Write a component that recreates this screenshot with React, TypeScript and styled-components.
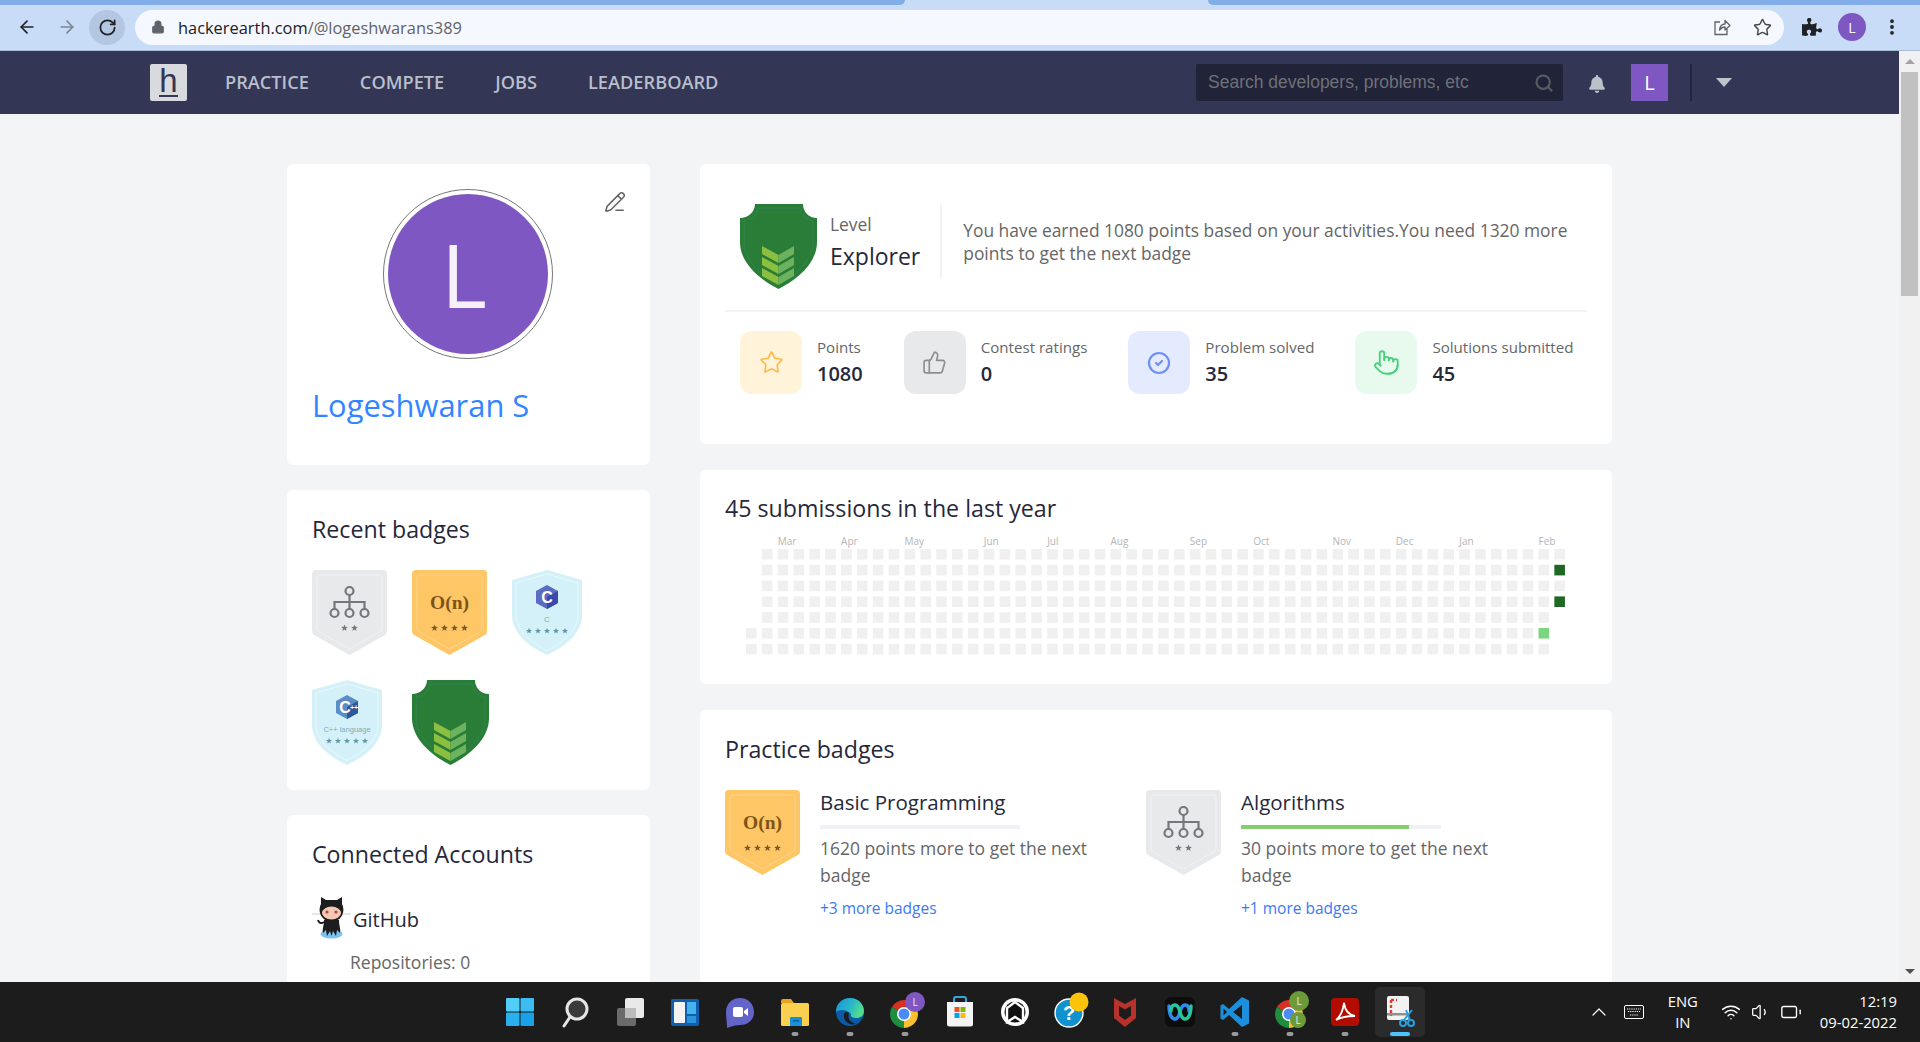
// import libraries
import React from 'react'
import styled, { createGlobalStyle } from 'styled-components'
import {
  ArrowLeft, ArrowRight, RotateCw, Lock, Star, MoreVertical, Search,
  PencilLine, ThumbsUp, Pointer, CircleCheck, ChevronUp, Wifi, Volume1, Battery
} from 'lucide-react'
import { FaBell, FaPuzzlePiece } from 'react-icons/fa'

const GlobalStyle = createGlobalStyle`
  html, body {
    margin: 0;
    height: 100%;
    overflow: hidden;
    background: #f3f4f6;
    font-family: "Open Sans", "Liberation Sans", sans-serif;
    color: #26283a;
  }
  * { box-sizing: border-box; }
`

const Shell = styled.div`
  display: flex;
  flex-direction: column;
  height: 100vh;
`

/* browser chrome */
const TabStrip = styled.div`
  display: flex;
  justify-content: space-between;
  height: 5px;
  background: #c8dcf8;
`
const TabEdge = styled.div<{ $side: 'left' | 'right' }>`
  height: 5px;
  width: ${(p) => (p.$side === 'left' ? '905px' : '712px')};
  background: #83ade9;
  border-radius: ${(p) => (p.$side === 'left' ? '0 0 6px 0' : '0 0 0 6px')};
`
const Toolbar = styled.div`
  display: flex;
  align-items: center;
  height: 46px;
  padding: 0 8px 1px 7px;
  background: #c8dcf8;
  border-bottom: 1px solid #a9bcd6;
`
const ToolSlot = styled.div<{ $muted?: boolean }>`
  display: flex;
  align-items: center;
  justify-content: center;
  width: 40px;
  height: 35px;
  color: ${(p) => (p.$muted ? '#7d8694' : '#202124')};
`
const ReloadCircle = styled.div`
  display: flex;
  align-items: center;
  justify-content: center;
  width: 36px;
  height: 35px;
  border-radius: 50%;
  background: #b4c7e2;
`
const Omnibox = styled.div`
  display: flex;
  flex: 1;
  align-items: center;
  height: 35px;
  margin: 0 8px;
  padding: 0 2px 0 16px;
  border-radius: 18px;
  background: #f5f8fe;
`
const Url = styled.span`
  flex: 1;
  margin-left: 13px;
  font-size: 16.4px;
  color: #5f6368;
`
const UrlHost = styled.span`
  color: #202124;
`
const ProfileDot = styled.div`
  display: flex;
  align-items: center;
  justify-content: center;
  width: 28px;
  height: 28px;
  border-radius: 50%;
  background: #7e57c2;
  color: #fff;
  font-size: 14px;
`

/* page */
const Viewport = styled.div`
  display: flex;
  flex: 1;
  min-height: 0;
`
const Page = styled.div`
  flex: 1;
  min-width: 0;
  overflow: hidden;
  background: #f3f4f6;
`
const Scrollbar = styled.div`
  display: flex;
  flex-direction: column;
  width: 21px;
  padding: 0 2px;
  background: #f1f1f1;
`
const ScrollArrow = styled.div`
  display: flex;
  align-items: center;
  justify-content: center;
  height: 21px;
  flex: none;
`
const ScrollThumb = styled.div`
  height: 224px;
  background: #c1c1c1;
`
const ScrollTrack = styled.div`
  flex: 1;
`
const ArrowGlyph = styled.div<{ $down?: boolean }>`
  width: 0;
  height: 0;
  border-left: 5px solid transparent;
  border-right: 5px solid transparent;
  ${(p) => (p.$down ? 'border-top: 5px solid #505050;' : 'border-bottom: 5px solid #a3a3a3;')}
`

const TopNav = styled.nav`
  display: flex;
  align-items: center;
  height: 63px;
  padding: 0 167px 0 150px;
  background: #333654;
`
const Logo = styled.div`
  position: relative;
  display: flex;
  justify-content: center;
  width: 37px;
  height: 37px;
  border-radius: 2px;
  background: #d9dade;
  color: #333654;
  font-family: "Liberation Sans", sans-serif;
  font-size: 33px;
  line-height: 33px;
  &::after {
    content: '';
    position: absolute;
    left: 9px;
    right: 9px;
    bottom: 4px;
    height: 2px;
    background: #333654;
  }
`
const NavLinks = styled.div`
  display: flex;
  gap: 51px;
  margin-left: 38px;
  padding-bottom: 2px;
`
const NavLink = styled.a`
  font-size: 18.2px;
  font-weight: 600;
  color: #b8bfcc;
`
const NavRight = styled.div`
  display: flex;
  align-items: center;
  margin-left: auto;
`
const SearchBox = styled.div`
  display: flex;
  align-items: center;
  justify-content: space-between;
  width: 367px;
  height: 37px;
  padding: 0 9px 0 12px;
  border-radius: 2px;
  background: #212339;
  color: #6d7177;
  font-family: "Liberation Sans", sans-serif;
  font-size: 17.5px;
`
const BellSlot = styled.div`
  display: flex;
  justify-content: center;
  width: 68px;
  padding-top: 3px;
  color: #bcc0c8;
`
const NavAvatar = styled.div`
  display: flex;
  align-items: center;
  justify-content: center;
  width: 37px;
  height: 37px;
  background: #7e57c2;
  color: #fff;
  font-size: 20px;
`
const NavDivider = styled.div`
  width: 2px;
  height: 37px;
  margin-left: 22px;
  background: #23253a;
`
const Caret = styled.div`
  width: 0;
  height: 0;
  margin-left: 24px;
  border-left: 8px solid transparent;
  border-right: 8px solid transparent;
  border-top: 9px solid #c0c4cc;
`

const Content = styled.div`
  display: flex;
  gap: 50px;
  padding: 50px 287px 0;
`
const LeftColumn = styled.div`
  display: flex;
  flex-direction: column;
  flex: none;
  gap: 25px;
  width: 363px;
`
const RightColumn = styled.div`
  display: flex;
  flex-direction: column;
  flex: none;
  gap: 26px;
  width: 912px;
`
const Card = styled.section`
  position: relative;
  padding: 24px 25px 25px;
  border-radius: 6px;
  background: #fff;
`
const CardTitle = styled.h2`
  margin: 0;
  font-size: 23.2px;
  font-weight: 500;
  line-height: 30px;
  color: #26283a;
`

/* profile */
const ProfileCard = styled(Card)`
  padding: 25px 25px 40px;
`
const AvatarRing = styled.div`
  display: flex;
  align-items: center;
  justify-content: center;
  width: 170px;
  height: 170px;
  margin-left: 71px;
  border: 1px solid #777;
  border-radius: 50%;
`
const AvatarDisc = styled.div`
  display: flex;
  align-items: center;
  justify-content: center;
  width: 160px;
  height: 160px;
  padding-right: 8px;
  border-radius: 50%;
  background: #7e57c2;
  color: #f6f0fb;
  font-size: 88px;
  font-weight: 500;
  line-height: 1;
`
const EditButton = styled.div`
  position: absolute;
  top: 27px;
  right: 24px;
  color: #666;
`
const ProfileName = styled.h1`
  margin: 26px 0 0;
  font-size: 30.9px;
  font-weight: 500;
  line-height: 40px;
  color: #3385ff;
`

const BadgeGrid = styled.div`
  display: grid;
  grid-template-columns: repeat(3, 75px);
  gap: 25px;
  margin-top: 26px;
`
const AccountRow = styled.div`
  display: flex;
  align-items: center;
  gap: 2px;
  margin-top: 27px;
  font-size: 20px;
  font-weight: 500;
`
const AccountName = styled.span`
  padding-top: 4px;
`
const AccountMeta = styled.div`
  margin: 11px 0 0 38px;
  font-size: 17.5px;
  line-height: 24px;
  color: #666;
`

/* level */
const LevelCard = styled(Card)`
  padding: 40px 25px 50px;
`
const LevelRow = styled.div`
  display: flex;
  align-items: flex-start;
  gap: 13px;
  padding: 0 0 21px 15px;
  border-bottom: 2px solid #f2f3f6;
`
const LevelInfo = styled.div`
  display: flex;
  align-items: center;
  height: 75px;
`
const LevelName = styled.div`
  display: flex;
  flex: none;
  flex-direction: column;
  gap: 4px;
`
const LevelLabel = styled.span`
  font-size: 17.4px;
  line-height: 24px;
  color: #666;
`
const LevelValue = styled.span`
  font-size: 23px;
  font-weight: 500;
  line-height: 32px;
`
const VerticalRule = styled.div`
  flex: none;
  width: 2px;
  height: 75px;
  margin: 0 21px 0 20px;
  background: #f2f3f6;
`
const LevelText = styled.p`
  width: 612px;
  margin: 0;
  font-size: 17.4px;
  line-height: 23px;
  color: #666;
`
const StatRow = styled.div`
  display: flex;
  gap: 41px;
  padding: 19px 15px 0;
`
const Stat = styled.div`
  display: flex;
  flex: none;
  align-items: center;
  gap: 15px;
`
const StatTile = styled.div<{ $bg: string; $fg: string }>`
  display: flex;
  align-items: center;
  justify-content: center;
  width: 62px;
  height: 63px;
  border-radius: 12px;
  background: ${(p) => p.$bg};
  color: ${(p) => p.$fg};
`
const StatText = styled.div`
  padding-bottom: 2px;
`
const StatLabel = styled.div`
  font-size: 15.1px;
  line-height: 20px;
  color: #666;
  white-space: nowrap;
`
const StatValue = styled.div`
  margin-top: 4px;
  font-size: 20px;
  font-weight: 600;
  line-height: 26px;
`

/* heatmap */
const HeatCard = styled(Card)`
  padding: 23px 25px 29px;
`
const HeatSvg = styled.svg`
  display: block;
  margin-top: 11px;
`
const MonthLabel = styled.text`
  font-family: "Open Sans", sans-serif;
  font-size: 10px;
  fill: #b5b5b5;
`

/* practice */
const PracticeGrid = styled.div`
  display: grid;
  grid-template-columns: 421px 421px;
  margin-top: 26px;
  padding-bottom: 80px;
`
const PracticeItem = styled.div`
  display: flex;
  align-items: flex-start;
  gap: 20px;
`
const PracticeBody = styled.div`
  width: 290px;
`
const PracticeName = styled.div`
  font-size: 20.5px;
  font-weight: 500;
  line-height: 24px;
`
const ProgressTrack = styled.div`
  width: 200px;
  height: 4px;
  margin-top: 11px;
  background: #f0f0f6;
`
const ProgressFill = styled.div`
  height: 100%;
  background: #84cc6c;
`
const PracticeText = styled.p`
  margin: 6px 0 0;
  font-size: 17.5px;
  line-height: 27px;
  color: #666;
`
const MoreLink = styled.a`
  display: block;
  margin-top: 9px;
  font-size: 15.5px;
  line-height: 20px;
  color: #3a7af5;
`

/* taskbar */
const Taskbar = styled.footer`
  display: grid;
  flex: none;
  grid-template-columns: 1fr auto 1fr;
  align-items: center;
  height: 60px;
  background: #1c1c1c;
`
const AppRow = styled.div`
  display: flex;
  grid-column: 2;
`
const AppSlot = styled.div<{ $active?: boolean }>`
  position: relative;
  display: flex;
  align-items: center;
  justify-content: center;
  width: 55px;
  height: 60px;
  &::before {
    content: '';
    position: absolute;
    top: 5px;
    left: 2px;
    width: 50px;
    height: 50px;
    border-radius: 5px;
    background: ${(p) => (p.$active ? '#2b2b2b' : 'transparent')};
  }
  svg {
    position: relative;
    overflow: visible;
  }
`
const RunDot = styled.span<{ $active?: boolean }>`
  position: absolute;
  left: 50%;
  bottom: 6px;
  width: ${(p) => (p.$active ? '20px' : '7px')};
  height: 4px;
  border-radius: 2px;
  background: ${(p) => (p.$active ? '#4cc2ff' : '#9a9a9a')};
  transform: translateX(-50%);
`
const Tray = styled.div`
  display: flex;
  align-items: center;
  justify-content: flex-end;
  padding-right: 23px;
  color: #fff;
  font-size: 14.8px;
  line-height: 21px;
`
const TraySlot = styled.div<{ $w: number }>`
  display: flex;
  align-items: center;
  justify-content: center;
  width: ${(p) => p.$w}px;
`
const TrayLang = styled.div`
  width: 62px;
  margin-right: 2px;
  text-align: center;
`
const TrayClock = styled.div`
  margin-left: 14px;
  text-align: right;
`

/* drawings */
const starPoints = (cx: number, cy: number, r: number) =>
  Array.from({ length: 10 }, (_, i) => {
    const rad = i % 2 === 0 ? r : r * 0.42
    const a = -Math.PI / 2 + (i * Math.PI) / 5
    return `${(cx + rad * Math.cos(a)).toFixed(2)},${(cy + rad * Math.sin(a)).toFixed(2)}`
  }).join(' ')

const Stars: React.FC<{ count: number; y: number; gap: number; r: number; fill: string; cx: number }> = ({ count, y, gap, r, fill, cx }) => (
  <>
    {Array.from({ length: count }, (_, i) => (
      <polygon key={i} points={starPoints(cx + (i - (count - 1) / 2) * gap, y, r)} fill={fill} />
    ))}
  </>
)

const ShareIcon: React.FC = () => (
  <svg width='20' height='20' viewBox='0 0 20 20' fill='none' stroke='#5f6368' strokeWidth='1.3'>
    <path d='M8 5H3V17.5H15V12' />
    <path d='M7.5 13C8 9 10.5 7 13 7V3.5L18 8.5L13 13V10C11 10 9 11 7.5 13z' strokeLinejoin='round' />
  </svg>
)

const KeyboardIcon: React.FC = () => (
  <svg width='20' height='14' viewBox='0 0 20 14' fill='none' stroke='#fff' strokeWidth='1'>
    <rect x='0.5' y='0.5' width='19' height='13' rx='1.5' />
    <path d='M3 4H17M4 6.5H16M6 10H14' strokeDasharray='1.2 1' />
  </svg>
)

const Pentagon: React.FC<{ fill: string; line: string; children: React.ReactNode }> = ({ fill, line, children }) => (
  <svg width='75' height='85' viewBox='0 0 75 85' style={{ flex: 'none' }}>
    <path d='M4 0H71a4 4 0 0 1 4 4V61a5 5 0 0 1-3 4.5L37.5 85 3 65.5A5 5 0 0 1 0 61V4a4 4 0 0 1 4-4z' fill={fill} />
    <path d='M7 5H68a2 2 0 0 1 2 2V59a3 3 0 0 1-2 2.8L37.5 79 7 61.8A3 3 0 0 1 5 59V7a2 2 0 0 1 2-2z' fill='none' stroke={line} strokeWidth='1' />
    {children}
  </svg>
)

const BasicBadge: React.FC = () => (
  <Pentagon fill='#fec665' line='#fdd48d'>
    <text x='37.5' y='38.5' textAnchor='middle' fontFamily='"Liberation Serif", serif' fontWeight='700' fontSize='19.5' fill='#7d5418'>O(n)</text>
    <Stars count={4} y={58} gap={10} r={3.6} fill='#7a5a2a' cx={37.5} />
  </Pentagon>
)

const AlgorithmBadge: React.FC = () => (
  <Pentagon fill='#e8e9eb' line='#f1f2f3'>
    <g fill='none' stroke='#77777b' strokeWidth='2.2'>
      <circle cx='37.5' cy='21' r='4' />
      <path d='M37.5 25V39M22.5 39V32H52.5V39' />
      <circle cx='22.5' cy='43' r='4' />
      <circle cx='37.5' cy='43' r='4' />
      <circle cx='52.5' cy='43' r='4' />
    </g>
    <Stars count={2} y={58} gap={10} r={3.6} fill='#77777b' cx={37.5} />
  </Pentagon>
)

const LangShield: React.FC<{ label: string; labelSize: number; hexA: string; hexB: string; mark: string }> = ({ label, labelSize, hexA, hexB, mark }) => (
  <svg width='70' height='85' viewBox='0 0 70 85'>
    <path d='M35 0L70 10V45C70 65 50 78 35 85C20 78 0 65 0 45V10z' fill='#d4f1f9' />
    <path d='M35 4L66 13V45C66 62 48 74 35 80.5C22 74 4 62 4 45V13z' fill='none' stroke='#e9f9fc' strokeWidth='1' />
    <path d='M35 15L46 21V33L35 39L24 33V21z' fill={hexA} />
    <path d='M35 27L46 21V33L35 39z' fill={hexB} />
    <text x={mark === 'C' ? 35 : 33} y='32.5' textAnchor='middle' fontFamily='"Liberation Sans", sans-serif' fontWeight='700' fontSize='16' fill='#fff'>C</text>
    {mark !== 'C' && <text x='42' y='30' textAnchor='middle' fontFamily='"Liberation Sans", sans-serif' fontWeight='700' fontSize='7' fill='#fff'>++</text>}
    <text x='35' y='52' textAnchor='middle' fontFamily='"Liberation Sans", sans-serif' fontSize={labelSize} fill='#7fabb6'>{label}</text>
    <Stars count={5} y={61} gap={9} r={3.2} fill='#5e94a0' cx={35} />
  </svg>
)

const ExplorerShield: React.FC = () => (
  <svg width='77' height='85' viewBox='0 0 77 85' style={{ flex: 'none' }}>
    <path d='M15 0H63C63 8 69 14 77 14V38C77 60 56 76 38.5 85C21 76 0 60 0 38V14C8 14 15 8 15 0z' fill='#2a7d36' />
    <path d='M18 4H60C61 11 66 16 73 17V38C73 58 54 72 38.5 80C23 72 4 58 4 38V17C11 16 17 11 18 4z' fill='none' stroke='#2f8552' strokeWidth='1' />
    {[0, 11, 22].map((dy) => (
      <g key={dy}>
        <path d={`M22 ${42 + dy}L38.5 ${51 + dy}V${59 + dy}L22 ${50 + dy}z`} fill='#8cbf3f' />
        <path d={`M54 ${42 + dy}L38.5 ${51 + dy}V${59 + dy}L54 ${50 + dy}z`} fill='#6db35f' />
      </g>
    ))}
  </svg>
)

const Octocat: React.FC = () => (
  <svg width='39' height='43' viewBox='0 0 39 43' style={{ flex: 'none' }}>
    <path d='M0 18H9M30 18H39' stroke='#e6e6e6' strokeWidth='2' />
    <ellipse cx='19.5' cy='38' rx='11' ry='4.5' fill='#7cc4ec' />
    <path d='M12 24C12 30 10 33 11 37L14 34L15 40L18 35L19.5 40L21 35L24 40L25 34L28 37C29 33 27 30 27 24z' fill='#1d1d1f' />
    <path d='M12 26C9 28 7 27 6 24' stroke='#1d1d1f' strokeWidth='2' fill='none' />
    <path d='M9 8L9 1L14 4H25L30 1L30 8C32 12 32 17 29 21C27 24 24 25 19.5 25C15 25 12 24 10 21C7 17 7 12 9 8z' fill='#1d1d1f' />
    <ellipse cx='19.5' cy='17' rx='9.5' ry='6.5' fill='#f4c8b4' />
    <circle cx='15' cy='16' r='1.6' fill='#b04a3a' />
    <circle cx='24' cy='16' r='1.6' fill='#b04a3a' />
  </svg>
)

const ChromeMark: React.FC<{ x?: number; y?: number }> = ({ x = 0, y = 0 }) => (
  <g transform={`translate(${x} ${y})`}>
    <path d='M16 16L3.9 9A14 14 0 0 1 28.1 9z' fill='#d93025' />
    <path d='M16 16L28.1 9A14 14 0 0 1 16 30z' fill='#fbc02d' />
    <path d='M16 16L16 30A14 14 0 0 1 3.9 9z' fill='#1e8e3e' />
    <circle cx='16' cy='16' r='7' fill='#fff' />
    <circle cx='16' cy='16' r='5.5' fill='#4a8bf5' />
  </g>
)

const AccountDot: React.FC<{ cx: number; cy: number; r: number; fill: string }> = ({ cx, cy, r, fill }) => (
  <g>
    <circle cx={cx} cy={cy} r={r} fill={fill} />
    <text x={cx} y={cy + 3.5} textAnchor='middle' fontFamily='"Open Sans", sans-serif' fontSize='10' fill='#e8e8e8'>L</text>
  </g>
)

const AppIcon: React.FC<{ children: React.ReactNode }> = ({ children }) => (
  <svg width='32' height='32' viewBox='0 0 32 32'>{children}</svg>
)

const TASKBAR_APPS: { name: string; running?: boolean; active?: boolean; icon: React.ReactNode }[] = [
  {
    name: 'start',
    icon: (
      <AppIcon>
        <rect x='2' y='2' width='13.5' height='13.5' rx='1' fill='#52cdf8' />
        <rect x='16.5' y='2' width='13.5' height='13.5' rx='1' fill='#3bbdf3' />
        <rect x='2' y='16.5' width='13.5' height='13.5' rx='1' fill='#2bb0ee' />
        <rect x='16.5' y='16.5' width='13.5' height='13.5' rx='1' fill='#1aa0e6' />
      </AppIcon>
    )
  },
  {
    name: 'search',
    icon: (
      <AppIcon>
        <circle cx='18' cy='13' r='10' fill='#3a3a3a' stroke='#e6e6e6' strokeWidth='3' />
        <path d='M11 21L5 30' stroke='#e6e6e6' strokeWidth='3' strokeLinecap='round' />
      </AppIcon>
    )
  },
  {
    name: 'task view',
    icon: (
      <AppIcon>
        <rect x='3' y='12' width='19' height='18' rx='2' fill='#6a6a6a' />
        <rect x='11' y='2' width='19' height='20' rx='2' fill='#e9e9e9' />
        <rect x='11' y='12' width='11' height='10' fill='#bcbcbc' />
      </AppIcon>
    )
  },
  {
    name: 'widgets',
    icon: (
      <AppIcon>
        <rect x='2' y='3' width='28' height='27' rx='2' fill='#0f5fae' />
        <rect x='5' y='6' width='11' height='21' rx='1' fill='#f3f3f3' />
        <rect x='18' y='6' width='9' height='12' fill='#45b3ee' />
        <rect x='18' y='20' width='9' height='7' fill='#2a94dc' />
      </AppIcon>
    )
  },
  {
    name: 'chat',
    icon: (
      <AppIcon>
        <path d='M16 2C24 2 30 8 30 16C30 24 24 29 16 29C12 29 8 30 3 32C3 26 2 22 2 16C2 8 8 2 16 2z' fill='#6264c8' />
        <rect x='9' y='11' width='10' height='10' rx='2' fill='#fff' />
        <path d='M20 15L24 12V20L20 17z' fill='#fff' />
      </AppIcon>
    )
  },
  {
    name: 'explorer',
    running: true,
    icon: (
      <AppIcon>
        <path d='M2 5a2 2 0 0 1 2-2H12L15 7H2z' fill='#e9a21e' />
        <rect x='2' y='7' width='28' height='23' rx='1.5' fill='#fcd04f' />
        <rect x='11' y='21' width='12' height='9' rx='1' fill='#1690d8' />
        <rect x='14' y='24' width='6' height='1.5' fill='#0c5c9e' />
      </AppIcon>
    )
  },
  {
    name: 'edge',
    running: true,
    icon: (
      <AppIcon>
        <defs>
          <linearGradient id='edgeTop' x1='0' y1='0' x2='1' y2='0.4'>
            <stop offset='0' stopColor='#1493d6' />
            <stop offset='0.6' stopColor='#2bb8c8' />
            <stop offset='1' stopColor='#4fdc8e' />
          </linearGradient>
        </defs>
        <circle cx='16' cy='16' r='14' fill='#0c5aa6' />
        <path d='M2 16C2 7 9 2 16 2C25 2 30 9 30 15C30 20 26 22 22 22C18 22 16 20 17 18C13 13 5 13 2 16z' fill='url(#edgeTop)' />
        <path d='M10 18C9 25 15 30 22 28C16 27 13 22 15 17C13 15 11 16 10 18z' fill='#1c1c1c' />
      </AppIcon>
    )
  },
  {
    name: 'chrome',
    running: true,
    icon: (
      <AppIcon>
        <ChromeMark x={-1} y={2} />
        <AccountDot cx={26} cy={6} r={10} fill='#7e57c2' />
      </AppIcon>
    )
  },
  {
    name: 'store',
    icon: (
      <AppIcon>
        <path d='M10 6V3a2 2 0 0 1 2-2H20a2 2 0 0 1 2 2V6' fill='none' stroke='#35a8e0' strokeWidth='2' />
        <path d='M3 6H29V28a2.5 2.5 0 0 1-2.5 2.5H5.5A2.5 2.5 0 0 1 3 28z' fill='#f4f4f4' />
        <rect x='10.5' y='11' width='5' height='5' fill='#f25022' />
        <rect x='16.5' y='11' width='5' height='5' fill='#7fba00' />
        <rect x='10.5' y='17' width='5' height='5' fill='#00a4ef' />
        <rect x='16.5' y='17' width='5' height='5' fill='#ffb900' />
      </AppIcon>
    )
  },
  {
    name: 'arc',
    icon: (
      <AppIcon>
        <circle cx='16' cy='16' r='14' fill='#fff' />
        <circle cx='16' cy='16' r='10.5' fill='#111' />
        <path d='M16 6L24 12V26L16 21L8 26V12z' fill='none' stroke='#fff' strokeWidth='2.4' />
      </AppIcon>
    )
  },
  {
    name: 'help',
    icon: (
      <AppIcon>
        <circle cx='15' cy='17' r='14' fill='#1291d0' stroke='#fff' strokeWidth='1.4' />
        <text x='15' y='24' textAnchor='middle' fontFamily='"Liberation Sans", sans-serif' fontWeight='700' fontSize='20' fill='#fff'>?</text>
        <circle cx='25' cy='6' r='9.5' fill='#fcc30b' />
      </AppIcon>
    )
  },
  {
    name: 'mcafee',
    icon: (
      <AppIcon>
        <path d='M5 2L16 8L27 2V22L16 31L5 22z' fill='#b8322c' />
        <path d='M10 10L16 13.5L22 10V19.5L16 24L10 19.5z' fill='#1c1c1c' />
      </AppIcon>
    )
  },
  {
    name: 'webex',
    icon: (
      <AppIcon>
        <rect x='1' y='1' width='30' height='30' rx='6' fill='#0d0d0d' />
        <path d='M5 10C5 19 8 23 11 23C14 23 15 20 16 16C17 12 18 9 21 9C24 9 25 12 25 15' fill='none' stroke='#2e8bf0' strokeWidth='3.4' strokeLinecap='round' />
        <path d='M27 10C27 19 24 23 21 23C18 23 17 20 16 16C15 12 14 9 11 9C8 9 7 12 7 15' fill='none' stroke='#27c79a' strokeWidth='3.4' strokeLinecap='round' />
      </AppIcon>
    )
  },
  {
    name: 'vscode',
    running: true,
    icon: (
      <AppIcon>
        <path d='M23 1L30 4.5V27.5L23 31L10 19L4 24L1.5 22.5V9.5L4 8L10 13z' fill='#1c8fdc' />
        <path d='M23 9L14 16L23 23z' fill='#1c1c1c' />
        <path d='M4.5 12.5L8 16L4.5 19.5z' fill='#1c1c1c' />
      </AppIcon>
    )
  },
  {
    name: 'chrome 2',
    running: true,
    icon: (
      <AppIcon>
        <ChromeMark x={-1} y={2} />
        <AccountDot cx={25} cy={5} r={10} fill='#6d9b3a' />
        <AccountDot cx={24} cy={24} r={8} fill='#6d9b3a' />
      </AppIcon>
    )
  },
  {
    name: 'acrobat',
    running: true,
    icon: (
      <AppIcon>
        <rect x='2' y='2' width='28' height='28' rx='4' fill='#b30b00' />
        <path d='M7 24C11 21 14 14 15 7C16 14 20 19 26 20C20 20 12 21 7 24z' fill='none' stroke='#fff' strokeWidth='1.8' />
      </AppIcon>
    )
  },
  {
    name: 'snipping tool',
    running: true,
    active: true,
    icon: (
      <AppIcon>
        <rect x='3' y='0' width='22' height='24' rx='2' fill='#f2f2f2' />
        <path d='M7 4H13M7 4V20' stroke='#d8412f' strokeWidth='2.4' strokeDasharray='3 2' />
        <rect x='3' y='17' width='22' height='2.5' fill='#8f8f8f' />
        <path d='M28 14L20 24M22 14L26 24' stroke='#2aa0e0' strokeWidth='2' />
        <circle cx='19' cy='27' r='3' fill='none' stroke='#2aa0e0' strokeWidth='2' />
        <circle cx='27' cy='27' r='3' fill='none' stroke='#2aa0e0' strokeWidth='2' />
      </AppIcon>
    )
  }
]

/* heatmap data */
const HEAT_COLUMNS = 52
const HEAT_ROWS = 7
const COL_PITCH = 15.85
const ROW_PITCH = 15.8
const MONTHS: [string, number][] = [
  ['Mar', 2], ['Apr', 6], ['May', 10], ['Jun', 15], ['Jul', 19], ['Aug', 23],
  ['Sep', 28], ['Oct', 32], ['Nov', 37], ['Dec', 41], ['Jan', 45], ['Feb', 50]
]

const cellColor = (col: number, row: number) => {
  if (col === 51 && (row === 1 || row === 3)) return '#1e6823'
  if (col === 50 && row === 5) return '#7bd67f'
  return '#f0f0f0'
}

const hasCell = (col: number, row: number) => {
  if (col === 0) return row >= 5
  if (col === 51) return row <= 3
  return true
}

const Heatmap: React.FC = () => (
  <HeatSvg width='862' height='121' viewBox='0 0 862 121'>
    {MONTHS.map(([name, col]) => (
      <MonthLabel key={name} x={21 + col * COL_PITCH} y={10.5}>{name}</MonthLabel>
    ))}
    {Array.from({ length: HEAT_COLUMNS }, (_, col) =>
      Array.from({ length: HEAT_ROWS }, (_, row) =>
        hasCell(col, row) ? (
          <rect key={`${col}-${row}`} x={21 + col * COL_PITCH} y={15 + row * ROW_PITCH} width='10.6' height='10.6' fill={cellColor(col, row)} />
        ) : null
      )
    )}
  </HeatSvg>
)

const STATS = [
  { label: 'Points', value: '1080', bg: '#fff4d9', fg: '#ffb74d', icon: <Star size={25} strokeWidth={1.6} /> },
  { label: 'Contest ratings', value: '0', bg: '#e8e9eb', fg: '#8e8e8e', icon: <ThumbsUp size={25} strokeWidth={1.6} /> },
  { label: 'Problem solved', value: '35', bg: '#e5ebff', fg: '#6f8ff7', icon: <CircleCheck size={24} strokeWidth={2.2} /> },
  { label: 'Solutions submitted', value: '45', bg: '#e8f9ee', fg: '#46d17a', icon: <Pointer size={27} strokeWidth={1.6} /> }
]

const App: React.FC = () => (
  <Shell>
    <GlobalStyle />
    <TabStrip>
      <TabEdge $side='left' />
      <TabEdge $side='right' />
    </TabStrip>
    <Toolbar>
      <ToolSlot><ArrowLeft size={20} strokeWidth={2} /></ToolSlot>
      <ToolSlot $muted><ArrowRight size={20} strokeWidth={2} /></ToolSlot>
      <ToolSlot><ReloadCircle><RotateCw size={19} strokeWidth={2.2} /></ReloadCircle></ToolSlot>
      <Omnibox>
        <Lock size={14} fill='#5f6368' color='#5f6368' />
        <Url><UrlHost>hackerearth.com</UrlHost>/@logeshwarans389</Url>
        <ToolSlot><ShareIcon /></ToolSlot>
        <ToolSlot><Star size={19} strokeWidth={1.8} color='#45474b' /></ToolSlot>
      </Omnibox>
      <ToolSlot><FaPuzzlePiece size={20} /></ToolSlot>
      <ToolSlot><ProfileDot>L</ProfileDot></ToolSlot>
      <ToolSlot><MoreVertical size={20} strokeWidth={2.6} /></ToolSlot>
    </Toolbar>

    <Viewport>
      <Page>
        <TopNav>
          <Logo>h</Logo>
          <NavLinks>
            <NavLink>PRACTICE</NavLink>
            <NavLink>COMPETE</NavLink>
            <NavLink>JOBS</NavLink>
            <NavLink>LEADERBOARD</NavLink>
          </NavLinks>
          <NavRight>
            <SearchBox>
              Search developers, problems, etc
              <Search size={20} strokeWidth={2.6} color='#565b63' />
            </SearchBox>
            <BellSlot><FaBell size={18} /></BellSlot>
            <NavAvatar>L</NavAvatar>
            <NavDivider />
            <Caret />
          </NavRight>
        </TopNav>

        <Content>
          <LeftColumn>
            <ProfileCard>
              <AvatarRing><AvatarDisc>L</AvatarDisc></AvatarRing>
              <EditButton><PencilLine size={22} strokeWidth={1.7} /></EditButton>
              <ProfileName>Logeshwaran S</ProfileName>
            </ProfileCard>
            <Card>
              <CardTitle>Recent badges</CardTitle>
              <BadgeGrid>
                <AlgorithmBadge />
                <BasicBadge />
                <LangShield label='C' labelSize={8} hexA='#5c6bc0' hexB='#3949ab' mark='C' />
                <LangShield label='C++ language' labelSize={7.5} hexA='#5c8dc4' hexB='#2a5a9a' mark='C++' />
                <ExplorerShield />
              </BadgeGrid>
            </Card>
            <Card>
              <CardTitle>Connected Accounts</CardTitle>
              <AccountRow><Octocat /><AccountName>GitHub</AccountName></AccountRow>
              <AccountMeta>Repositories: 0</AccountMeta>
            </Card>
          </LeftColumn>

          <RightColumn>
            <LevelCard>
              <LevelRow>
                <ExplorerShield />
                <LevelInfo>
                  <LevelName>
                    <LevelLabel>Level</LevelLabel>
                    <LevelValue>Explorer</LevelValue>
                  </LevelName>
                  <VerticalRule />
                  <LevelText>You have earned 1080 points based on your activities.You need 1320 more points to get the next badge</LevelText>
                </LevelInfo>
              </LevelRow>
              <StatRow>
                {STATS.map((stat) => (
                  <Stat key={stat.label}>
                    <StatTile $bg={stat.bg} $fg={stat.fg}>{stat.icon}</StatTile>
                    <StatText>
                      <StatLabel>{stat.label}</StatLabel>
                      <StatValue>{stat.value}</StatValue>
                    </StatText>
                  </Stat>
                ))}
              </StatRow>
            </LevelCard>

            <HeatCard>
              <CardTitle>45 submissions in the last year</CardTitle>
              <Heatmap />
            </HeatCard>

            <Card>
              <CardTitle>Practice badges</CardTitle>
              <PracticeGrid>
                <PracticeItem>
                  <BasicBadge />
                  <PracticeBody>
                    <PracticeName>Basic Programming</PracticeName>
                    <ProgressTrack />
                    <PracticeText>1620 points more to get the next badge</PracticeText>
                    <MoreLink>+3 more badges</MoreLink>
                  </PracticeBody>
                </PracticeItem>
                <PracticeItem>
                  <AlgorithmBadge />
                  <PracticeBody>
                    <PracticeName>Algorithms</PracticeName>
                    <ProgressTrack><ProgressFill style={{ width: '84%' }} /></ProgressTrack>
                    <PracticeText>30 points more to get the next badge</PracticeText>
                    <MoreLink>+1 more badges</MoreLink>
                  </PracticeBody>
                </PracticeItem>
              </PracticeGrid>
            </Card>
          </RightColumn>
        </Content>
      </Page>
      <Scrollbar>
        <ScrollArrow><ArrowGlyph /></ScrollArrow>
        <ScrollThumb />
        <ScrollTrack />
        <ScrollArrow><ArrowGlyph $down /></ScrollArrow>
      </Scrollbar>
    </Viewport>

    <Taskbar>
      <AppRow>
        {TASKBAR_APPS.map((app) => (
          <AppSlot key={app.name} $active={app.active}>
            {app.icon}
            {app.running && <RunDot $active={app.active} />}
          </AppSlot>
        ))}
      </AppRow>
      <Tray>
        <TraySlot $w={35}><ChevronUp size={24} strokeWidth={1.2} /></TraySlot>
        <TraySlot $w={35}><KeyboardIcon /></TraySlot>
        <TrayLang>ENG<br />IN</TrayLang>
        <TraySlot $w={30}><Wifi size={20} strokeWidth={1.8} /></TraySlot>
        <TraySlot $w={30}><Volume1 size={20} strokeWidth={1.5} /></TraySlot>
        <TraySlot $w={30}><Battery size={22} strokeWidth={1.5} /></TraySlot>
        <TrayClock>12:19<br />09-02-2022</TrayClock>
      </Tray>
    </Taskbar>
  </Shell>
)

export default App
